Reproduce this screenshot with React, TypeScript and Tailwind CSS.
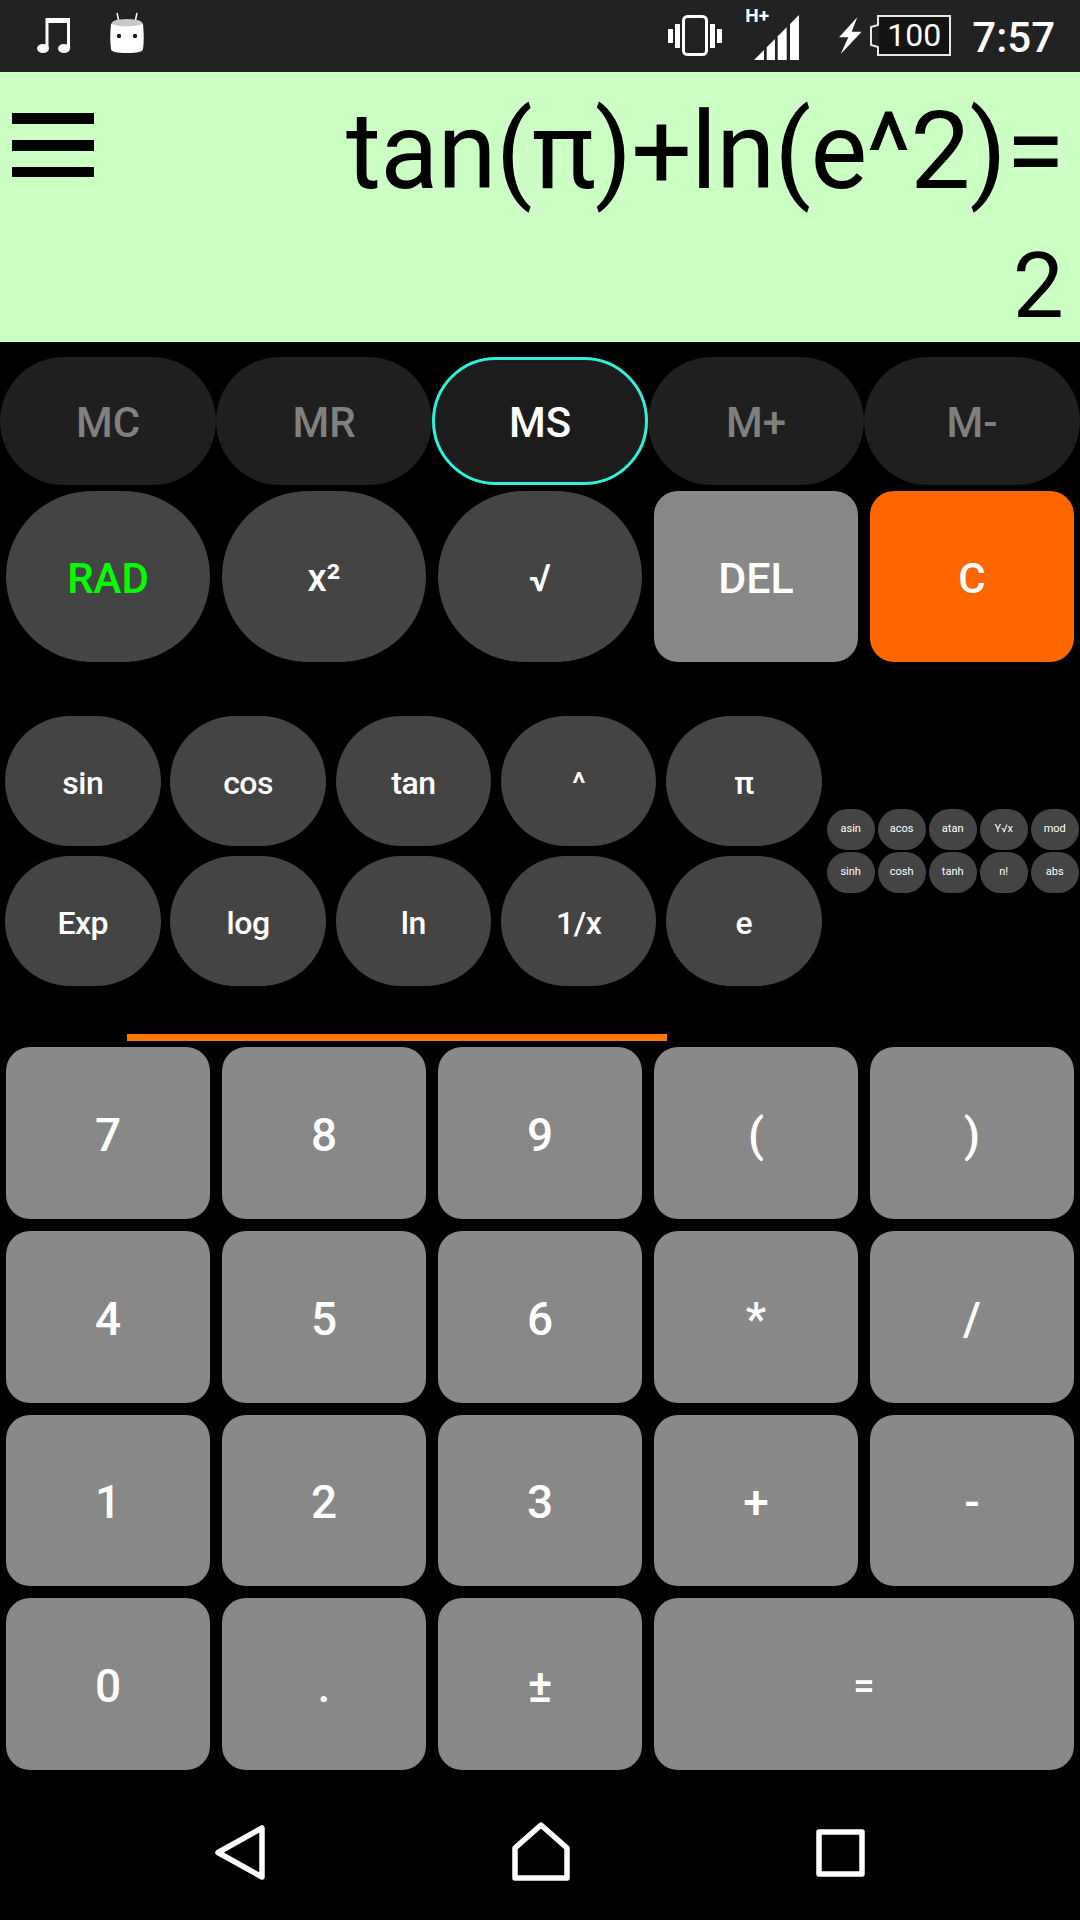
import type { ReactNode } from 'react';

const memoryKeys = ['MC', 'MR', 'MS', 'M+', 'M-'];
const sciKeys = ['sin', 'cos', 'tan', '^', 'π', 'Exp', 'log', 'ln', '1/x', 'e'];
const smallKeys = ['asin', 'acos', 'atan', 'Y√x', 'mod', 'sinh', 'cosh', 'tanh', 'n!', 'abs'];
const padKeys = ['7', '8', '9', '(', ')', '4', '5', '6', '*', '/', '1', '2', '3', '+', '-', '0', '.', '±'];

function Key({ children, className }: { children: ReactNode; className: string }) {
  return <button className={`flex items-center justify-center ${className}`}>{children}</button>;
}

function StatusBar() {
  return (
    <div className="flex h-[72px] shrink-0 items-start justify-between bg-[#222222] pr-[25px] pl-[37px] text-white">
      <div className="flex items-start">
        <svg className="mt-[18px]" width="33" height="35" viewBox="0 0 33 35" fill="white">
          <path d="M8.5 0H33V30H30V5H11.5V30H8.5Z" />
          <ellipse cx="6" cy="30.500" rx="6" ry="4.500" />
          <ellipse cx="27" cy="30.500" rx="6" ry="4.500" />
        </svg>
        <svg className="mt-[12px] ml-[40px]" width="34" height="42" viewBox="0 0 34 42">
          <path d="M7 1l2 9M27 1l-2 9" stroke="white" strokeWidth="1.500" />
          <path d="M1 13Q1 7 17 7T33 13V18H1Z" fill="#c9c9c9" />
          <path d="M1 12Q17 17 33 12C34 22 34 30 33 37Q33 41 17 41T1 37C0 30 0 22 1 12Z" fill="white" />
          <circle cx="9" cy="24" r="2.200" fill="#222222" />
          <circle cx="25" cy="24" r="2.200" fill="#222222" />
        </svg>
      </div>
      <div className="flex items-start">
        <svg className="mt-[15px]" width="54" height="41" viewBox="0 0 54 41" fill="white">
          <rect x="0" y="14" width="5" height="14" />
          <rect x="7" y="9" width="5" height="24" />
          <rect x="15.500" y="1.500" width="23" height="38" rx="4" fill="none" stroke="white" strokeWidth="3" />
          <rect x="42" y="9" width="5" height="24" />
          <rect x="49" y="14" width="5" height="14" />
        </svg>
        <div className="relative ml-[32px] h-[60px] w-[45px]">
          <span className="absolute top-[6px] left-[-9px] text-[19px] leading-[20px] font-bold">H+</span>
          <svg className="absolute top-[15px] left-0" width="45" height="45" viewBox="0 0 45 45" fill="white">
            <polygon points="0,45 10,45 10,35" />
            <polygon points="12.700,45 21,45 21,24 12.700,32.300" />
            <polygon points="23.700,45 32.700,45 32.700,12.300 23.700,21.300" />
            <polygon points="36,45 45,45 45,0 36,9" />
          </svg>
        </div>
        <svg className="mt-[17px] ml-[40px]" width="23" height="37" viewBox="200 17 23 37" fill="white">
          <polygon points="218.300,17.300 200,37.300 209.300,37.300 201.700,54 222.700,31.700 212.700,31.700" />
        </svg>
        <div className="relative mt-[15px] ml-[7px] h-[41px] w-[82px]">
          <svg width="82" height="41" viewBox="0 0 82 41">
            <path d="M9 1H81V40H9V32L2 30V12L9 10Z" fill="#222222" stroke="#e8e8e8" strokeWidth="2" />
            <rect x="10" y="2" width="70" height="37" fill="#141414" />
          </svg>
          <span className="absolute top-0 left-[10px] w-[70px] text-center text-[32px] leading-[41px]">100</span>
        </div>
        <span className="mt-[15px] ml-[21px] text-[42px] leading-[46px] font-medium">7:57</span>
      </div>
    </div>
  );
}

function Display() {
  return (
    <div className="relative flex h-[270px] shrink-0 flex-col items-end bg-[#ccffc4] pr-[16px] text-black">
      <svg className="absolute top-[41px] left-[12px]" width="82" height="64" viewBox="0 0 82 64" fill="black">
        <rect y="0" width="82" height="11" />
        <rect y="27" width="82" height="11" />
        <rect y="54" width="82" height="10" />
      </svg>
      <div className="mt-[16px] text-[107px] leading-[128px] tracking-[-0.8px] whitespace-nowrap">tan(π)+ln(e^2)=</div>
      <div className="mt-[15px] text-[91px] leading-[110px]">2</div>
    </div>
  );
}

function NavBar() {
  return (
    <div className="flex flex-1 items-start justify-between pt-[55px] pr-[215px] pl-[215px]">
      <svg width="50" height="55" viewBox="0 0 50 55" fill="none" stroke="white" strokeWidth="5.500" strokeLinejoin="round">
        <path d="M47 3V52L3 27.500Z" />
      </svg>
      <svg className="mt-[-3px]" width="58" height="59" viewBox="0 0 58 59" fill="none" stroke="white" strokeWidth="5.500" strokeLinejoin="round">
        <path d="M29 3L55 26V56H3V26Z" />
      </svg>
      <svg className="mt-[4px]" width="49" height="48" viewBox="0 0 49 48" fill="none" stroke="white" strokeWidth="5.500" strokeLinejoin="round">
        <rect x="3" y="3" width="43" height="42" />
      </svg>
    </div>
  );
}

export default function App() {
  return (
    <div className="flex h-[1920px] w-[1080px] flex-col overflow-hidden bg-black font-[Roboto,sans-serif]">
      <StatusBar />
      <Display />

      <div className="mt-[15px] grid h-[128px] shrink-0 grid-cols-5">
        {memoryKeys.map((label) => (
          <Key
            key={label}
            className={
              label === 'MS'
                ? 'rounded-full border-[3px] border-[#2ef2d8] bg-[#1c1c1c] pt-[2px] text-[42px] font-medium text-white'
                : 'rounded-full bg-[#1f1f1f] pt-[2px] text-[42px] font-medium text-[#808080]'
            }
          >
            {label}
          </Key>
        ))}
      </div>

      <div className="mt-[6px] grid h-[171px] shrink-0 grid-cols-5 gap-x-3 px-1.5">
        <Key className="rounded-full bg-[#444444] pt-[4px] text-[42px] font-medium text-[#00ff00]">RAD</Key>
        <Key className="rounded-full bg-[#444444] pt-[4px] text-[38px] font-medium text-white">x²</Key>
        <Key className="rounded-full bg-[#444444] pt-[4px] text-[38px] font-medium text-white">√</Key>
        <Key className="rounded-[24px] bg-[#888888] pt-[4px] text-[43px] font-medium text-white">DEL</Key>
        <Key className="rounded-[24px] bg-[#ff6600] pt-[4px] text-[42px] font-medium text-white">C</Key>
      </div>

      <div className="mt-[54px] flex h-[270px] shrink-0 items-center pl-[5px]">
        <div className="grid grid-cols-[repeat(5,155.500px)] grid-rows-[repeat(2,130.500px)] gap-x-[9.800px] gap-y-[9.500px]">
          {sciKeys.map((label) => (
            <Key key={label} className="rounded-full bg-[#444444] pt-[4px] text-[32px] font-medium tracking-[-0.5px] text-white">
              {label}
            </Key>
          ))}
        </div>
        <div className="ml-[5px] grid grid-cols-[repeat(5,48px)] grid-rows-[repeat(2,41px)] gap-x-[3px] gap-y-[2px]">
          {smallKeys.map((label) => (
            <Key key={label} className="rounded-full bg-[#444444] text-[11px] font-normal text-white">
              {label}
            </Key>
          ))}
        </div>
      </div>

      <div className="mt-[48px] ml-[127px] h-[7px] w-[540px] shrink-0 bg-[#ff7800]" />

      <div className="mt-[6px] grid h-[723px] shrink-0 grid-cols-5 grid-rows-4 gap-3 px-1.5">
        {padKeys.map((label) => (
          <Key key={label} className="rounded-[24px] bg-[#888888] pt-[5px] text-[46px] font-medium text-white">
            {label}
          </Key>
        ))}
        <Key className="col-span-2 rounded-[24px] bg-[#888888] pt-[5px] text-[38px] font-medium text-white">=</Key>
      </div>

      <NavBar />
    </div>
  );
}
